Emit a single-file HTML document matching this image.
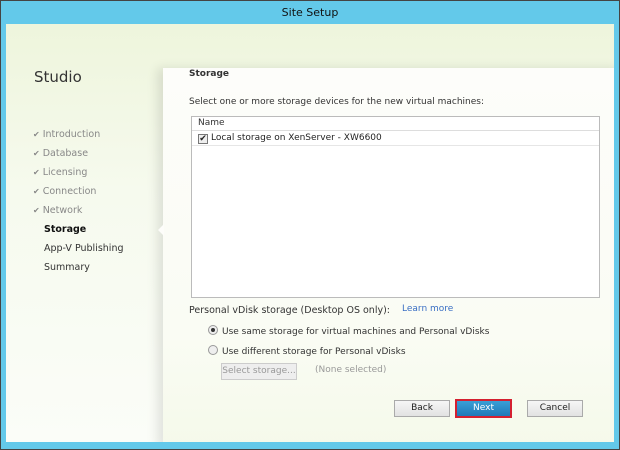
<!DOCTYPE html>
<html><head><style>
*{margin:0;padding:0;box-sizing:border-box}
body{width:620px;height:450px;position:relative;overflow:hidden;font-family:"DejaVu Sans","Liberation Sans",sans-serif;font-size:9px;color:#222;background:#444}
.frame{position:absolute;left:1px;top:1px;width:618px;height:448px;background:#63c9ea}
.title{position:absolute;left:0;top:0;width:618px;height:23px;text-align:center;line-height:23px;font-size:11px;color:#111}
.content{position:absolute;left:5px;top:23px;width:608px;height:418px;background:linear-gradient(180deg,#eef5dc 0%,#f6faee 40%,#fbfdf8 100%);overflow:hidden}
.panel{position:absolute;left:157px;top:44px;width:460px;height:380px;background:linear-gradient(180deg,#fdfdfa,#fafcf4 70%,#f5f9ea);box-shadow:-6px 0 10px rgba(0,0,0,0.10)}
.studio{position:absolute;left:28px;top:44px;font-size:15px;color:#333}
.nav{position:absolute;left:27px;font-size:9.5px;color:#888}
.nav.done:before{content:"✔";color:#888;margin-right:3px;font-size:8px}
.nav.plain{left:38px;color:#333}
.notch{position:absolute;left:152px;top:200px;width:0;height:0;border-top:6px solid transparent;border-bottom:6px solid transparent;border-right:6px solid #fdfdfa}
.t{position:absolute;font-size:9px;color:#333}
.list{position:absolute;left:185px;top:92px;width:409px;height:182px;background:#fff;border:1px solid #bbb}
.hdr{height:14px;border-bottom:1px solid #ddd;padding-left:6px;line-height:13px;color:#333}
.row{height:15px;border-bottom:1px solid #e6e6e6;padding-left:6px;line-height:15px;color:#222}
.cb{display:inline-block;width:10px;height:10px;border:1px solid #777;background:#eee;vertical-align:-1px;margin-right:3px;font-size:9px;line-height:8px;text-align:center}
.radio{display:inline-block;width:10px;height:10px;border-radius:50%;border:1px solid #999;background:#eee;vertical-align:-1px;margin-right:4px;position:relative}
.radio.on:after{content:"";position:absolute;left:2px;top:2px;width:4px;height:4px;border-radius:50%;background:#333}
.btn{position:absolute;height:17px;border:1px solid #aaa;background:linear-gradient(#f6f6f6,#e2e2e2);text-align:center;line-height:15px;color:#222;font-size:9px}
</style></head><body>
<div class="frame">
<div class="title">Site Setup</div>
<div class="content">
<div class="studio">Studio</div>
<div class="nav done" style="top:105px">Introduction</div>
<div class="nav done" style="top:124px">Database</div>
<div class="nav done" style="top:143px">Licensing</div>
<div class="nav done" style="top:162px">Connection</div>
<div class="nav done" style="top:181px">Network</div>
<div class="nav plain" style="top:200px;font-weight:bold;color:#111">Storage</div>
<div class="nav plain" style="top:219px">App-V Publishing</div>
<div class="nav plain" style="top:238px">Summary</div>
<div class="panel"></div>
<div class="notch"></div>
<div class="t" style="left:183px;top:45px;font-weight:bold;color:#333">Storage</div>
<div class="t" style="left:183px;top:73px">Select one or more storage devices for the new virtual machines:</div>
<div class="list">
<div class="hdr">Name</div>
<div class="row"><span class="cb">✔</span>Local storage on XenServer - XW6600</div>
</div>
<div class="t" style="left:183px;top:281px;font-size:9.5px">Personal vDisk storage (Desktop OS only):</div>
<div class="t" style="left:396px;top:280px;color:#3a6fc4">Learn more</div>
<div class="t" style="left:202px;top:301px"><span class="radio on"></span>Use same storage for virtual machines and Personal vDisks</div>
<div class="t" style="left:202px;top:321px"><span class="radio"></span>Use different storage for Personal vDisks</div>
<div class="btn" style="left:215px;top:339px;width:76px;color:#999;border-color:#ccc;background:#eee">Select storage...</div>
<div class="t" style="left:309px;top:341px;color:#999">(None selected)</div>
<div class="btn" style="left:388px;top:376px;width:56px">Back</div>
<div class="btn" style="left:449px;top:375px;width:57px;height:19px;border:2px solid #d42030;background:linear-gradient(#3a9fd6,#1e78b8);color:#fff">Next</div>
<div class="btn" style="left:521px;top:376px;width:56px">Cancel</div>
</div>
</div>
</body></html>
